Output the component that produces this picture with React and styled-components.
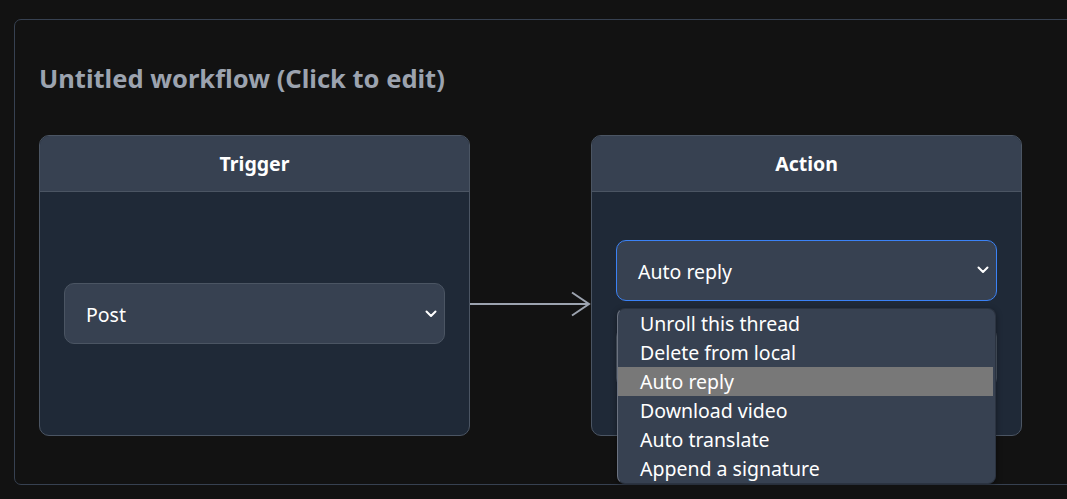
import React from "react";
import styled, { createGlobalStyle } from "styled-components";

const GlobalStyle = createGlobalStyle`
  html, body {
    margin: 0;
    padding: 0;
    background: #121212;
    overflow: hidden;
  }
  body {
    font-family: "Noto Sans", "Open Sans", sans-serif;
  }
`;

const Chevron = () => (
  <svg width="12" height="8" viewBox="0 0 12 8" fill="none">
    <path d="M1.5 1.5 L6 6 L10.5 1.5" stroke="#fff" strokeWidth="2" strokeLinecap="round" strokeLinejoin="round" />
  </svg>
);

const Select = ({ value, focused }) => (
  <SelectBox focused={focused}>
    <SelectText>{value}</SelectText>
    <Chevron />
  </SelectBox>
);

const options = [
  "Unroll this thread",
  "Delete from local",
  "Auto reply",
  "Download video",
  "Auto translate",
  "Append a signature",
];

const App = () => {
  return (
    <>
      <GlobalStyle />
      <Page>
        <Panel>
          <Title>Untitled workflow (Click to edit)</Title>
          <Flow>
            <Card>
              <CardHeader>Trigger</CardHeader>
              <CardBody>
                <Select value="Post" />
              </CardBody>
            </Card>
            <Connector>
              <svg width="121" height="30" viewBox="0 0 121 30">
                <line x1="0" y1="15" x2="119" y2="15" stroke="#9ca3af" strokeWidth="2" />
                <path d="M102 3.5 L119 15 L102 26.5" stroke="#9ca3af" strokeWidth="2" fill="none" />
              </svg>
            </Connector>
            <Card>
              <CardHeader>Action</CardHeader>
              <CardBody>
                <SelectWrap>
                  <Select value="Auto reply" focused />
                  <Menu>
                    {options.map((o) => (
                      <MenuItem key={o} active={o === "Auto reply"}>
                        {o}
                      </MenuItem>
                    ))}
                  </Menu>
                </SelectWrap>
                <Select value="" />
              </CardBody>
            </Card>
          </Flow>
        </Panel>
      </Page>
    </>
  );
};
export default App;

const Page = styled.div`
  padding: 19px 0 0 14px;
  width: 1200px;
`;

const Panel = styled.div`
  width: 1100px;
  height: 466px;
  box-sizing: border-box;
  border: 1px solid #374151;
  border-radius: 7px;
  padding: 42px 24px 0 24px;
`;

const Title = styled.div`
  font-size: 25.5px;
  font-weight: 700;
  color: #9ca3af;
  line-height: 32px;
  margin-bottom: 41px;
`;

const Flow = styled.div`
  display: flex;
  align-items: flex-start;
`;

const Card = styled.div`
  width: 431px;
  height: 301px;
  box-sizing: border-box;
  border: 1px solid #4b5563;
  border-radius: 10px;
  background: #1f2937;
  display: flex;
  flex-direction: column;
`;

const CardHeader = styled.div`
  height: 56px;
  flex-shrink: 0;
  box-sizing: border-box;
  background: #374151;
  border-bottom: 1px solid #4b5563;
  border-radius: 9px 9px 0 0;
  color: #fff;
  font-size: 19.5px;
  font-weight: 700;
  display: flex;
  align-items: center;
  justify-content: center;
`;

const CardBody = styled.div`
  flex: 1;
  display: flex;
  flex-direction: column;
  justify-content: center;
  gap: 26px;
  padding: 0 24px;
`;

const Connector = styled.div`
  width: 121px;
  height: 30px;
  display: flex;
  margin-top: 154px;
`;

const SelectWrap = styled.div`
  position: relative;
`;

const SelectBox = styled.div`
  height: 61px;
  box-sizing: border-box;
  border: 1px solid ${(p) => (p.focused ? "#3b82f6" : "#4b5563")};
  border-radius: 10px;
  background: #374151;
  display: flex;
  align-items: center;
  justify-content: space-between;
  padding: 0 7px 0 21px;
  color: #fff;
`;

const SelectText = styled.span`
  font-size: 19.5px;
  margin-top: 2px;
`;

const Menu = styled.div`
  position: absolute;
  left: 1px;
  right: 1px;
  top: 68px;
  background: #374151;
  border: 1px solid #2b3340;
  border-left-color: #6b7280;
  border-radius: 8px;
  overflow: hidden;
  z-index: 2;
  box-shadow: 0 2px 6px rgba(0, 0, 0, 0.4);
`;

const MenuItem = styled.div`
  height: 29px;
  line-height: 29px;
  padding-left: 22px;
  margin-right: 2px;
  font-size: 19.5px;
  color: #fff;
  background: ${(p) => (p.active ? "#787878" : "transparent")};
`;
